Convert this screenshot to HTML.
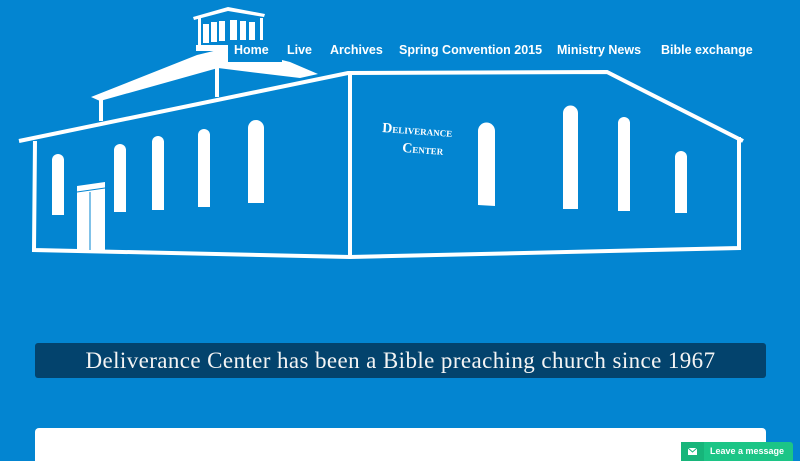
<!DOCTYPE html>
<html style="height:461px;overflow:hidden"><head><meta charset="utf-8"><style>
body{margin:0;width:800px;height:461px;overflow:hidden;background:#0385d1;font-family:"Liberation Sans",sans-serif;position:relative}
svg{position:absolute;left:0;top:0}
.nav{position:absolute;top:43px;left:0;color:#fff;font-weight:bold;font-size:12.5px}
.nav span{position:absolute;white-space:nowrap}
.banner{position:absolute;left:35px;top:343px;width:731px;height:35px;background:#03436d;border-radius:3px;color:#f4f4f4;font-family:"Liberation Serif",serif;font-size:23px;letter-spacing:0.4px;text-align:center;line-height:35px}
.card{position:absolute;left:35px;top:428px;width:731px;height:33px;background:#fff;border-radius:4px 4px 0 0}
.msg{position:absolute;left:681px;top:442px;width:112px;height:19px;background:#1cc586;border-radius:3px 3px 0 0;color:#fff;font-size:9px;font-weight:bold;line-height:19px}
.msg i{position:absolute;left:0;top:0;width:23px;height:19px;background:#17b57a}
</style></head><body>
<svg width="800" height="461" viewBox="0 0 800 461">
<g fill="#fff" stroke="none">
<polygon points="91,97 197,55 230,47 290,62 318,74 300,78 250,72 218,68 100,101"/>
<rect x="99" y="99" width="4" height="22"/>
<rect x="215" y="67" width="4" height="30"/>
<polygon points="193,17 228,7 265,14 264,17 228,11 194,20"/>
<rect x="198" y="18" width="3" height="28"/>
<rect x="260" y="18" width="3" height="22"/>
<rect x="196" y="45" width="32" height="6"/>
<rect x="203" y="24" width="6" height="19"/><rect x="211" y="22" width="6" height="20"/><rect x="219" y="21" width="6" height="20"/>
<rect x="230" y="20" width="7" height="20"/><rect x="240" y="21" width="6" height="19"/><rect x="249" y="22" width="6" height="18"/>
</g>
<rect x="228" y="40" width="54" height="22" fill="#0385d1"/>
<g fill="none" stroke="#fff" stroke-width="4" stroke-linejoin="miter">
<polyline points="19,141 348,73 607,72 743,141"/>
<polyline points="35,141 34,250 350,257 739,248 739,137"/>
<line x1="350" y1="74" x2="350" y2="257"/>
</g>
<g fill="#fff">
<path d="M52,215V160a6,6 0 0 1 12,0V215z"/>
<path d="M114,212V150a6,6 0 0 1 12,0V212z"/>
<path d="M152,210V142a6,6 0 0 1 12,0V210z"/>
<path d="M198,207V135a6,6 0 0 1 12,0V207z"/>
<path d="M248,203V128a8,8 0 0 1 16,0V203z"/>
<polygon points="77,186 105,182 105,250 77,250"/>
<path d="M478,205V131a8,8 0 0 1 17,0V206z"/>
<path d="M563,209V113a7.5,7.5 0 0 1 15,0V209z"/>
<path d="M618,211V123a6,6 0 0 1 12,0V211z"/>
<path d="M675,213V157a6,6 0 0 1 12,0V213z"/>
</g>
<g stroke="#0385d1" stroke-width="1"><line x1="77" y1="192" x2="105" y2="188"/><line x1="90" y1="192" x2="90" y2="250"/></g>
<g fill="#fff" font-family="Liberation Serif,serif" font-weight="bold">
<text x="382" y="132" font-size="14" transform="rotate(4 382 132)">D<tspan font-size="9">ELIVERANCE</tspan></text>
<text x="402" y="152" font-size="14" transform="rotate(4 402 152)">C<tspan font-size="9">ENTER</tspan></text>
</g>
</svg>
<div class="nav"><span style="left:234px">Home</span><span style="left:287px">Live</span><span style="left:330px">Archives</span><span style="left:399px">Spring Convention 2015</span><span style="left:557px">Ministry News</span><span style="left:661px">Bible exchange</span></div>
<div class="banner">Deliverance Center has been a Bible preaching church since 1967</div>
<div class="card"></div>
<div class="msg"><i><svg width="23" height="19"><path d="M7,6h9v7h-9z" fill="#fff"/><path d="M7,6l4.5,4 4.5,-4" stroke="#17b57a" fill="none"/></svg></i><span style="position:absolute;left:29px">Leave a message</span></div>
</body></html>
